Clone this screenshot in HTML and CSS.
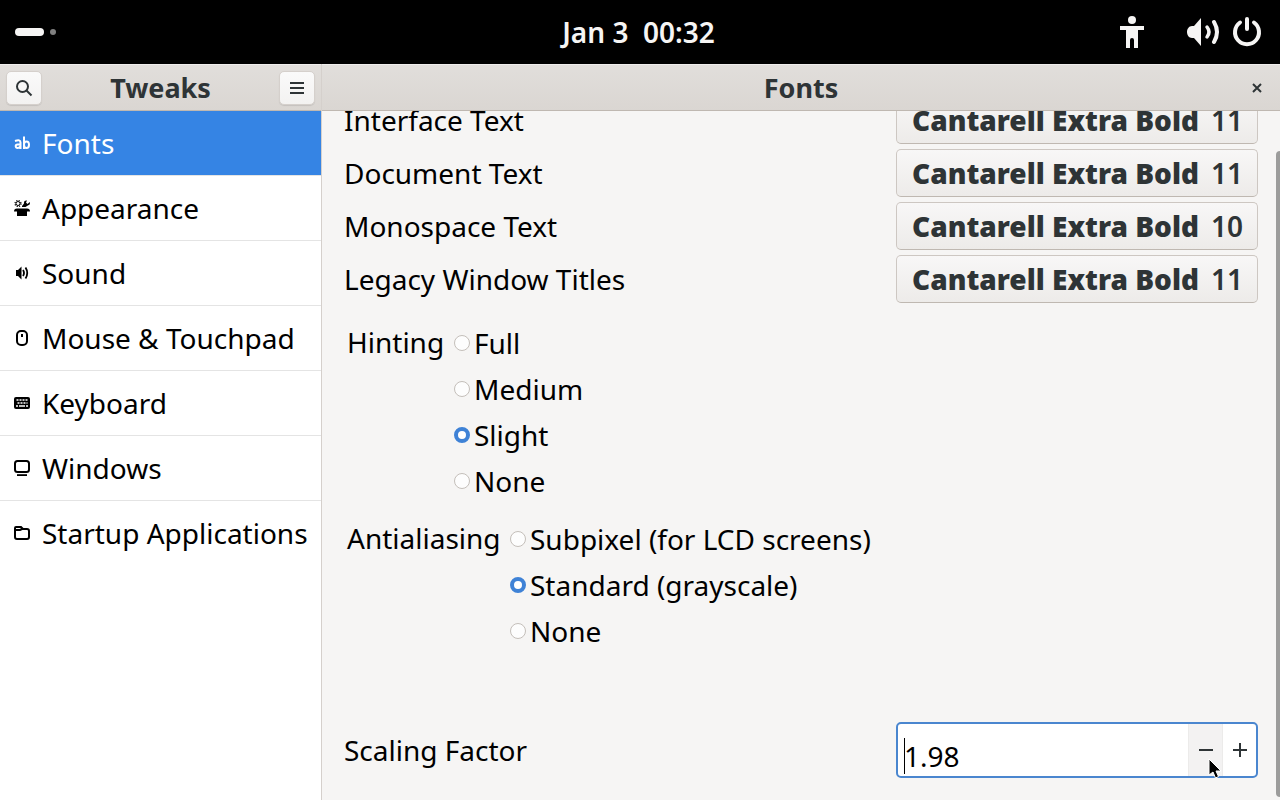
FILE: index.html
```html
<!DOCTYPE html>
<html lang="en">
<head>
    <meta charset="UTF-8">
    <meta name="viewport" content="width=device-width, initial-scale=1.0">
    <title>Tweaks</title>
    <link rel="stylesheet" href="styles.css">
</head>
<body>
    <div class="topbar">
        <div class="workspaces">
            <span class="pill"></span>
            <span class="dot"></span>
        </div>
        <time class="clock">Jan 3&nbsp; 00:32</time>
        <div class="status">
            <svg class="access" width="24" height="32" viewBox="0 0 24 32" fill="#f6f5f4"><circle cx="12" cy="4" r="4"/><path d="M0 10h24v4h-6v18h-4v-8a2 2 0 0 0-4 0v8H6V14H0z"/></svg>
            <svg width="34" height="30" viewBox="0 0 34 30" fill="none" stroke="#f6f5f4" stroke-width="4" stroke-linecap="round"><path d="M6 9h2l7-8v28l-7-8H6c-3 0-5-3-5-6s2-6 5-6z" fill="#f6f5f4" stroke="none"/><path d="M21 10q4 5 0 10" stroke-width="3.500"/><path d="M28 5q6 10 0 20"/></svg>
            <svg width="30" height="30" viewBox="0 0 30 30" fill="none" stroke="#f6f5f4" stroke-width="4" stroke-linecap="round"><path d="M8 5.500A12 12 0 1 0 22 5.500M15 2v10"/></svg>
        </div>
    </div>

    <div class="window">
        <div class="sidebar">
            <header class="headerbar">
                <button class="header-btn" type="button" aria-label="Search">
                    <svg width="18" height="18" viewBox="0 0 18 18" fill="none" stroke="#2e3436" stroke-width="2"><circle cx="7.500" cy="7.500" r="5.500"/><path d="M11.500 11.500l5 5"/></svg>
                </button>
                <h1 class="title">Tweaks</h1>
                <button class="header-btn" type="button" aria-label="Menu">
                    <svg width="18" height="18" viewBox="0 0 18 18" fill="none" stroke="#2e3436" stroke-width="2"><path d="M2 4h14M2 9h14M2 14h14"/></svg>
                </button>
            </header>
            <nav class="nav">
                <a class="nav-item active" href="#fonts">
                    <svg width="16" height="16" viewBox="0 0 16 16" fill="none" stroke="#fff" stroke-width="2"><path d="M1 6q5.500-2 5.500 1.500V14M6.500 9.500h-3a1.800 1.800 0 0 0 0 3.600q2 0 3-2M10 1.500V14"/><ellipse cx="12.500" cy="9.700" rx="2.500" ry="3.300"/></svg>
                    Fonts
                </a>
                <a class="nav-item" href="#appearance">
                    <svg width="16" height="16" viewBox="0 0 16 16"><circle cx="4" cy="3.500" r="2" fill="none" stroke="#000" stroke-width="1"/><circle cx="4" cy="3.500" r="3" fill="none" stroke="#000" stroke-width="1.200" stroke-dasharray="1.200 1.200"/><path d="M8 6l2-2.500Q9.500 0 13 .5l-1 2L13.500 4 15.800 2q.8 3-2 3.500L11.500 7H8zM3 8.500h10q3 0 3 3h-3V16H3v-4.500H0q0-3 3-3z"/></svg>
                    Appearance
                </a>
                <a class="nav-item" href="#sound">
                    <svg width="16" height="16" viewBox="0 0 16 16" fill="none" stroke="#000" stroke-width="1.800"><path d="M2 5h2l3.500-3.500v13L4 11H2z" fill="#000" stroke="none"/><path d="M9 5q2 3 0 6M11.500 2.500q3.500 5.500 0 11"/></svg>
                    Sound
                </a>
                <a class="nav-item" href="#mouse">
                    <svg width="16" height="16" viewBox="0 0 16 16" fill="none" stroke="#000" stroke-width="2"><rect x="3" y="1" width="10" height="14" rx="4"/><path d="M8 4v3"/></svg>
                    Mouse &amp; Touchpad
                </a>
                <a class="nav-item" href="#keyboard">
                    <svg width="16" height="16" viewBox="0 0 16 16"><rect x="0" y="2" width="16" height="12" rx="2"/><path d="M2.500 5h2m1 0h2m1 0h2m1 0h2M3.500 8h2m1 0h2m1 0h2m1 0h1M2 11h2m1 0h6m1 0h2" stroke="#fff" stroke-width="1.600"/></svg>
                    Keyboard
                </a>
                <a class="nav-item" href="#windows">
                    <svg width="16" height="16" viewBox="0 0 16 16" fill="none" stroke="#000" stroke-width="2"><rect x="1" y="1" width="14" height="11" rx="2.500"/><path d="M3 15.200h10"/></svg>
                    Windows
                </a>
                <a class="nav-item" href="#startup">
                    <svg width="16" height="16" viewBox="0 0 16 16" fill="none" stroke="#000" stroke-width="2"><path d="M1 12V3q0-1 1-1h5l2 2h4q2 0 2 2v6q0 2-2 2H3q-2 0-2-2zM1 5h5l2-1"/></svg>
                    Startup Applications
                </a>
            </nav>
        </div>

        <main class="main">
            <header class="headerbar">
                <h2 class="title title-main">Fonts</h2>
                <button class="close-btn" type="button" aria-label="Close">
                    <svg width="10" height="10" viewBox="0 0 10 10" stroke="#2e3436" stroke-width="2"><path d="M1 1l8 8M9 1l-8 8"/></svg>
                </button>
            </header>
            <div class="scroller">
                <form class="page">
                    <div class="font-list">
                        <div class="row">
                            <label for="interface">Interface Text</label>
                            <button class="font-btn" id="interface" type="button"><b>Cantarell Extra Bold</b><span>11</span></button>
                        </div>
                        <div class="row">
                            <label for="document">Document Text</label>
                            <button class="font-btn" id="document" type="button"><b>Cantarell Extra Bold</b><span>11</span></button>
                        </div>
                        <div class="row">
                            <label for="monospace">Monospace Text</label>
                            <button class="font-btn" id="monospace" type="button"><b>Cantarell Extra Bold</b><span>10</span></button>
                        </div>
                        <div class="row">
                            <label for="legacy">Legacy Window Titles</label>
                            <button class="font-btn" id="legacy" type="button"><b>Cantarell Extra Bold</b><span>11</span></button>
                        </div>
                    </div>

                    <div class="group" role="radiogroup" aria-labelledby="hinting">
                        <span class="group-label hinting" id="hinting">Hinting</span>
                        <div class="options">
                            <label class="option"><input type="radio" name="hinting">Full</label>
                            <label class="option"><input type="radio" name="hinting">Medium</label>
                            <label class="option"><input type="radio" name="hinting" checked>Slight</label>
                            <label class="option"><input type="radio" name="hinting">None</label>
                        </div>
                    </div>

                    <div class="group" role="radiogroup" aria-labelledby="antialiasing">
                        <span class="group-label antialiasing" id="antialiasing">Antialiasing</span>
                        <div class="options">
                            <label class="option"><input type="radio" name="antialiasing">Subpixel (for LCD screens)</label>
                            <label class="option"><input type="radio" name="antialiasing" checked>Standard (grayscale)</label>
                            <label class="option"><input type="radio" name="antialiasing">None</label>
                        </div>
                    </div>

                    <div class="row scaling">
                        <label for="scale">Scaling Factor</label>
                        <div class="spin">
                            <input class="spin-input" id="scale" type="text" value="1.98">
                            <span class="caret"></span>
                            <button class="spin-btn hover" type="button" aria-label="Decrease">
                                <svg width="16" height="16" viewBox="0 0 16 16" stroke="#2e3436" stroke-width="2"><path d="M1 8h14"/></svg>
                                <svg class="pointer" width="16" height="22" viewBox="0 0 16 22"><path d="M2 1v16l4-3 2.500 6 3-1.500L9 13h5z" fill="#000" stroke="#fff"/></svg>
                            </button>
                            <button class="spin-btn" type="button" aria-label="Increase">
                                <svg width="16" height="16" viewBox="0 0 16 16" stroke="#2e3436" stroke-width="2"><path d="M1 8h14M8 1v14"/></svg>
                            </button>
                        </div>
                    </div>
                </form>
                <div class="scrollbar"></div>
            </div>
        </main>
    </div>
</body>
</html>
```

FILE: styles.css
```css
* {
    box-sizing: border-box;
}
body {
    margin: 0;
    height: 100vh;
    display: flex;
    flex-direction: column;
    overflow: hidden;
    font-family: "Noto Sans", sans-serif;
    font-size: 28px;
    line-height: 40px;
    color: #000;
    background: #f6f5f4;
}
button, input {
    font: inherit;
    margin: 0;
    padding: 0;
}
svg {
    flex: none;
    display: block;
}

/* top panel */
.topbar {
    display: grid;
    grid-template-columns: 1fr auto 1fr;
    align-items: center;
    height: 64px;
    padding: 0 18px 0 15px;
    background: #000;
    color: #f6f5f4;
}
.workspaces {
    display: flex;
    align-items: center;
    gap: 6px;
}
.pill {
    width: 29px;
    height: 8px;
    border-radius: 4px;
    background: #f6f5f4;
}
.dot {
    width: 6px;
    height: 6px;
    border-radius: 50%;
    background: #808080;
}
.clock {
    font-size: 28px;
    font-weight: 600;
}
.status {
    display: flex;
    justify-content: flex-end;
    align-items: center;
    gap: 12px;
}
.access {
    margin-right: 30px;
}

/* window */
.window {
    flex: 1;
    min-height: 0;
    display: flex;
}
.sidebar {
    width: 322px;
    flex: none;
    display: flex;
    flex-direction: column;
    background: #fff;
    border-right: 1px solid #d5d0cc;
}
.main {
    flex: 1;
    min-width: 0;
    display: flex;
    flex-direction: column;
}
.headerbar {
    flex: none;
    display: flex;
    align-items: center;
    height: 47px;
    padding: 0 6px;
    background: linear-gradient(#e1dedb, #dad6d2);
    border-top: 1px solid #efedec;
    border-bottom: 1px solid #bfb8b1;
}
.title {
    flex: 1;
    margin: 0;
    font-size: 27px;
    font-weight: 700;
    line-height: 40px;
    text-align: center;
    color: #2e3436;
}
.title-main {
    padding-left: 34px;
}
.header-btn {
    display: flex;
    align-items: center;
    justify-content: center;
    width: 36px;
    height: 34px;
    border: 1px solid #d5d0cc;
    border-radius: 5px;
    background: linear-gradient(#fafafa, #f3f2f1);
    box-shadow: 0 1px 1px rgba(0, 0, 0, 0.1);
}
.close-btn {
    display: flex;
    align-items: center;
    justify-content: center;
    width: 34px;
    height: 34px;
    border: none;
    background: none;
}

/* categories */
.nav-item {
    display: flex;
    align-items: center;
    gap: 12px;
    height: 65px;
    padding-left: 14px;
    border-bottom: 1px solid #e4e4e4;
    color: #000;
    text-decoration: none;
    white-space: nowrap;
}
.nav-item:last-child {
    border-bottom-color: transparent;
}
.nav-item.active {
    background: #3584e4;
    color: #fff;
}

/* the page stays scrolled to its end */
.scroller {
    position: relative;
    flex: 1;
    min-height: 0;
    display: flex;
    flex-direction: column;
    justify-content: flex-end;
    overflow: hidden;
}
.page {
    padding: 0 22px;
}
.scrollbar {
    position: absolute;
    top: 40px;
    right: 0;
    bottom: 3px;
    width: 4px;
    border-radius: 4px 0 0 4px;
    background: #9c9c9b;
}
.font-list {
    display: flex;
    flex-direction: column;
    gap: 5px;
    margin-bottom: 17px;
}
.row {
    display: flex;
    align-items: center;
    justify-content: space-between;
}
.font-btn {
    display: flex;
    align-items: center;
    justify-content: flex-end;
    gap: 12px;
    width: 362px;
    height: 48px;
    padding: 0 14px;
    border: 1px solid #cdc7c2;
    border-bottom-color: #bfb8b1;
    border-radius: 5px;
    background: linear-gradient(#f8f7f7, #edebe9);
    color: #2e3436;
    font-size: 28px;
    font-weight: 600;
    white-space: nowrap;
}
.font-btn b {
    font-weight: 900;
}
.group {
    display: flex;
    margin-bottom: 12px;
    padding-left: 3px;
}
.group-label {
    line-height: 44px;
}
.hinting {
    width: 107px;
}
.antialiasing {
    width: 163px;
}
.option {
    display: flex;
    align-items: center;
    gap: 4px;
    height: 46px;
}
.option input {
    appearance: none;
    width: 16px;
    height: 16px;
    border: 1px solid #c4bfba;
    border-radius: 50%;
    background: #fdfdfd;
}
.option input:checked {
    border: 4px solid #3f82d6;
    background: #fff;
}
.scaling {
    margin: 68px 0 22px;
}
.spin {
    position: relative;
    display: flex;
    width: 362px;
    height: 56px;
    border: 2px solid #4a86cf;
    border-radius: 5px;
    background: #fff;
}
.spin-input {
    flex: 1;
    min-width: 0;
    padding: 12px 0 0 6px;
    border: none;
    outline: none;
    background: none;
}
.caret {
    position: absolute;
    left: 6px;
    top: 14px;
    width: 1px;
    height: 36px;
    background: #000;
}
.spin-btn {
    position: relative;
    display: flex;
    align-items: center;
    justify-content: center;
    width: 34px;
    border: none;
    border-left: 1px solid #ecebea;
    background: none;
}
.spin-btn.hover {
    background: #f3f2f2;
}
.pointer {
    position: absolute;
    left: 18px;
    top: 34px;
    z-index: 1;
}
```
